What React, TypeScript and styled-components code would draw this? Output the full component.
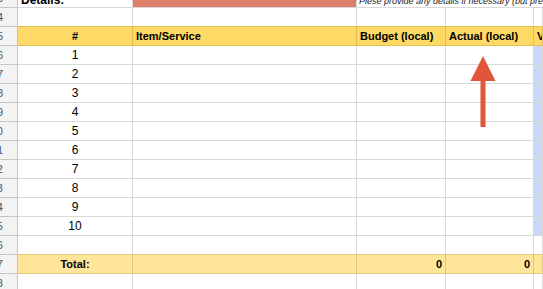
import React from "react";
import styled, { createGlobalStyle, css } from "styled-components";

const GlobalStyle = createGlobalStyle`
  html, body { margin: 0; padding: 0; background: #ffffff; overflow: hidden; }
  body { font-family: "Liberation Sans", Arial, sans-serif; font-size: 12px; color: #000; }
`;

const COLS = "18px 115px 224px 89px 88px 1fr";

type Tone = "plain" | "header" | "total" | "blue" | "salmon";

const toneStyles: Record<Tone, ReturnType<typeof css>> = {
  plain: css`
    background: #ffffff;
    border-color: #d9d9d9;
  `,
  header: css`
    background: #ffd966;
    border-color: #e2c15c;
    box-shadow: 0 -1px 0 #e2c15c;
    font-weight: bold;
    font-size: 11px;
  `,
  total: css`
    background: #ffe599;
    border-color: #e3c976;
    box-shadow: 0 -1px 0 #e3c976;
    font-weight: bold;
    font-size: 11px;
  `,
  blue: css`
    background: #c9daf8;
    border-color: #d9d9d9;
  `,
  salmon: css`
    background: #dd7e6b;
    border-color: #d9d9d9;
  `,
};

const Page = styled.div`
  position: relative;
  width: 543px;
  height: 289px;
  overflow: hidden;
`;

const Sheet = styled.div`
  margin-top: -11px;
  display: flex;
  flex-direction: column;
`;

const Row = styled.div`
  display: grid;
  grid-template-columns: ${COLS};
  height: 19px;
`;

const RowHead = styled.div`
  box-sizing: border-box;
  display: flex;
  justify-content: flex-end;
  background: #f3f3f3;
  border-right: 1px solid #c6c6c6;
  border-bottom: 1px solid #c6c6c6;
  color: #4d5563;
  font-size: 11px;
  line-height: 18px;
  padding-right: 14px;
  overflow: hidden;
  white-space: nowrap;
`;

const Cell = styled.div<{ $tone?: Tone; $align?: "left" | "center" | "right"; $span?: number }>`
  box-sizing: border-box;
  border-right: 1px solid;
  border-bottom: 1px solid;
  ${(p) => toneStyles[p.$tone ?? "plain"]}
  text-align: ${(p) => p.$align ?? "left"};
  ${(p) => (p.$span ? `grid-column: span ${p.$span};` : "")}
  padding: 0 3px;
  line-height: 18px;
  white-space: nowrap;
  overflow: hidden;
`;

const DetailsLabel = styled(Cell)`
  font-weight: bold;
  font-size: 12px;
  padding-top: 2px;
`;

const Note = styled(Cell)`
  font-style: italic;
  font-size: 9px;
  padding-left: 2px;
  padding-top: 3px;
  border-right: none;
  color: #222;
`;

const ArrowMark = styled.svg`
  position: absolute;
  left: 470px;
  top: 55px;
`;

const items = [1, 2, 3, 4, 5, 6, 7, 8, 9, 10];

export default function App() {
  return (
    <Page>
      <GlobalStyle />
      <Sheet>
        <Row>
          <RowHead><span>3</span></RowHead>
          <DetailsLabel>Details:</DetailsLabel>
          <Cell $tone="salmon" />
          <Note $span={3}>Plese provide any details if necessary (but preferably in English)</Note>
        </Row>
        <Row>
          <RowHead><span>4</span></RowHead>
          <Cell />
          <Cell />
          <Cell />
          <Cell />
          <Cell />
        </Row>
        <Row>
          <RowHead><span>5</span></RowHead>
          <Cell $tone="header" $align="center">#</Cell>
          <Cell $tone="header">Item/Service</Cell>
          <Cell $tone="header">Budget (local)</Cell>
          <Cell $tone="header">Actual (local)</Cell>
          <Cell $tone="header">Variance</Cell>
        </Row>
        {items.map((n, i) => (
          <Row key={n}>
            <RowHead><span>{i + 6}</span></RowHead>
            <Cell $align="center">{n}</Cell>
            <Cell />
            <Cell />
            <Cell />
            <Cell $tone="blue" />
          </Row>
        ))}
        <Row>
          <RowHead><span>16</span></RowHead>
          <Cell />
          <Cell />
          <Cell />
          <Cell />
          <Cell />
        </Row>
        <Row>
          <RowHead><span>17</span></RowHead>
          <Cell $tone="total" $align="center">Total:</Cell>
          <Cell $tone="total" />
          <Cell $tone="total" $align="right">0</Cell>
          <Cell $tone="total" $align="right">0</Cell>
          <Cell $tone="total" />
        </Row>
        <Row>
          <RowHead><span>18</span></RowHead>
          <Cell />
          <Cell />
          <Cell />
          <Cell />
          <Cell />
        </Row>
      </Sheet>
      <ArrowMark width="26" height="72" viewBox="0 0 26 72">
        <polygon points="13,1 0.5,26 25.5,26" fill="#e0553b" />
        <rect x="10.5" y="25" width="5" height="47" fill="#e0553b" />
      </ArrowMark>
    </Page>
  );
}
